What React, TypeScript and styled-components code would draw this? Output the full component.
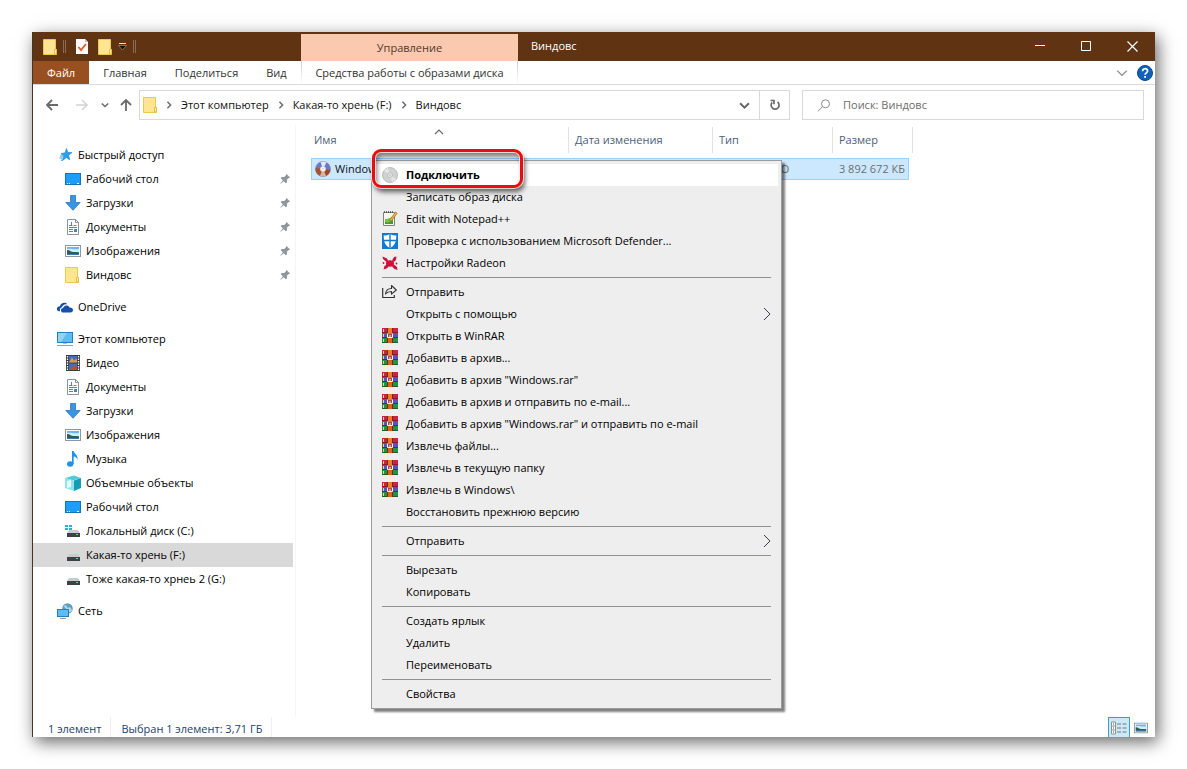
import React from "react";
import styled, { createGlobalStyle, css } from "styled-components";

const GlobalStyle = createGlobalStyle`
  *, *::before, *::after { box-sizing: border-box; }
  body {
    margin: 0;
    background: #fff;
    color: #000;
    font: 11px/16px "Open Sans", "Noto Sans", sans-serif;
  }
  button, input { font: inherit; color: inherit; }
  svg { display: block; flex: none; }
`;

const plainButton = css`
  display: flex;
  align-items: center;
  margin: 0;
  padding: 0;
  border: 0;
  background: none;
  white-space: nowrap;
  cursor: default;
`;

const Page = styled.div`
  min-height: 100vh;
  padding: 32px;
  display: flex;
`;

const Window = styled.div`
  flex: 1;
  min-width: 0;
  display: flex;
  flex-direction: column;
  background: #fff;
  border-left: 1px solid #4a3420;
  box-shadow: 3px 5px 16px rgba(0, 0, 0, 0.6);
`;

/* ---------- title bar and ribbon ---------- */

const Header = styled.header`
  display: grid;
  grid-template-columns: 268px 217px 1fr;
  grid-template-rows: 29px 23px;
  border-bottom: 1px solid #dadbdc;
`;

const QuickTools = styled.div`
  display: flex;
  align-items: center;
  padding-left: 10px;
  background: #603313;
`;

const ToolButton = styled.button<{ $after?: number }>`
  ${plainButton}
  margin-right: ${(p) => p.$after ?? 6}px;
`;

const Grip = styled.span`
  width: 3px;
  height: 13px;
  margin-right: 10px;
  border: solid #8b6b55;
  border-width: 0 1px;
`;

const ContextCap = styled.div`
  display: flex;
  padding-top: 2px;
  background: #603313;
`;

const ContextTitle = styled.div`
  flex: 1;
  padding-top: 1px;
  display: flex;
  align-items: center;
  justify-content: center;
  background: #fbc9b0;
  color: #54382b;
`;

const TitleBar = styled.div`
  display: flex;
  align-items: stretch;
  background: #603313;
  color: #fff;
`;

const Title = styled.h1`
  flex: 1;
  margin: 0;
  padding: 6px 13px;
  font-size: 11px;
  font-weight: 400;
`;

const WindowButton = styled.button`
  ${plainButton}
  width: 46px;
  justify-content: center;
`;

const Tabs = styled.nav`
  display: flex;
`;

const Tab = styled.button<{ $file?: boolean }>`
  ${plainButton}
  padding: 0 14px;
  color: ${(p) => (p.$file ? "#fff" : "#333")};
  background: ${(p) => (p.$file ? "#985020" : "none")};
`;

const ContextTab = styled.button`
  ${plainButton}
  justify-content: center;
  color: #333;
  border: solid;
  border-width: 0 1px;
  border-image: linear-gradient(#c9cacb, #fff) 1;
`;

const RibbonEnd = styled.div`
  display: flex;
  align-items: center;
  justify-content: flex-end;
  gap: 9px;
  padding-right: 2px;
`;

/* ---------- navigation row ---------- */

const NavRow = styled.div`
  display: flex;
  align-items: center;
  padding: 5px 11px 5px 0;
`;

const NavButtons = styled.div`
  display: flex;
  align-items: center;
  width: 106px;
  padding-left: 12px;
`;

const NavButton = styled.button<{ $gap?: number }>`
  ${plainButton}
  margin-right: ${(p) => p.$gap ?? 0}px;
`;

const AddressBar = styled.div`
  flex: 1;
  height: 30px;
  display: flex;
  align-items: center;
  padding-left: 3px;
  border: 1px solid #d9d9d9;
`;

const Crumb = styled.button`
  ${plainButton}
  color: #111;
`;

const CrumbArrow = styled.span`
  width: 24px;
  display: flex;
  justify-content: center;
`;

const AddressEnd = styled.button<{ $divided?: boolean }>`
  ${plainButton}
  justify-content: center;
  align-self: stretch;
  width: 30px;
  border-left: ${(p) => (p.$divided ? "1px solid #d9d9d9" : "0")};
`;

const Spacer = styled.span`
  flex: 1;
`;

const SearchBox = styled.label`
  flex: 0 0 342px;
  height: 30px;
  margin-left: 12px;
  padding-left: 14px;
  display: flex;
  align-items: center;
  gap: 12px;
  border: 1px solid #d9d9d9;
`;

const SearchInput = styled.input`
  flex: 1;
  min-width: 0;
  padding: 0;
  border: 0;
  outline: 0;
  background: none;
  &::placeholder { color: #6d6d6d; opacity: 1; }
`;

/* ---------- body ---------- */

const Body = styled.div`
  flex: 1;
  display: flex;
`;

const Sidebar = styled.nav`
  width: 263px;
  padding: 18px 2px 0 0;
  border-right: 1px solid #f5f5f5;
`;

const Group = styled.ul`
  margin: 0 0 8px;
  padding: 0;
  list-style: none;
`;

const SideLink = styled.a<{ $nested?: boolean; $active?: boolean }>`
  height: 24px;
  padding: 0 2px 0 ${(p) => (p.$nested ? 32 : 24)}px;
  display: flex;
  align-items: center;
  gap: 5px;
  color: #000;
  text-decoration: none;
  background: ${(p) => (p.$active ? "#d9d9d9" : "none")};
  white-space: nowrap;
`;

const SideLabel = styled.span`
  flex: 1;
`;

const Main = styled.main`
  flex: 1;
  position: relative;
  padding: 2px 0 0 15px;
`;

const FileTable = styled.table`
  table-layout: fixed;
  width: 602px;
  border-collapse: separate;
  border-spacing: 0;
`;

const HeadCell = styled.th<{ $width: number; $pad?: number }>`
  position: relative;
  width: ${(p) => p.$width}px;
  height: 26px;
  padding: 0 0 0 ${(p) => p.$pad ?? 6}px;
  border-right: ${(p) => (p.$width === 76 ? "0" : "1px solid #e2e2e2")};
  color: #4c607a;
  font-weight: 400;
  text-align: left;
`;

const SortMark = styled.span`
  position: absolute;
  top: 0;
  left: 50%;
  margin-left: -6px;
`;

const Gap = styled.td`
  height: 5px;
  padding: 0;
`;

const Cell = styled.td<{ $first?: boolean; $last?: boolean }>`
  height: 22px;
  padding: 0 3px 0 ${(p) => (p.$first ? 3 : p.$last ? 0 : 6)}px;
  background: #cce8ff;
  border: solid #99d1ff;
  border-width: 1px ${(p) => (p.$last ? 1 : 0)}px 1px ${(p) => (p.$first ? 1 : 0)}px;
  color: ${(p) => (p.$first ? "#111" : "#6d6d6d")};
  text-align: ${(p) => (p.$last ? "right" : "left")};
  white-space: nowrap;
`;

const FileName = styled.span`
  display: flex;
  align-items: center;
  gap: 4px;
`;

/* ---------- context menu ---------- */

const Menu = styled.div`
  position: absolute;
  top: 35px;
  left: 75px;
  width: 411px;
  padding: 3px;
  background: #eee;
  border: 1px solid #9b9b9b;
  box-shadow: 3px 3px 2px rgba(0, 0, 0, 0.5);
`;

const MenuItem = styled.button<{ $active?: boolean }>`
  ${plainButton}
  width: 100%;
  height: 22px;
  padding: 0 7px;
  gap: 8px;
  text-align: left;
  color: #000;
  background: ${(p) => (p.$active ? "#fff" : "none")};
  font-weight: ${(p) => (p.$active ? 700 : 400)};
`;

const IconSlot = styled.span`
  width: 16px;
  height: 16px;
`;

const MenuLabel = styled.span`
  flex: 1;
`;

const Separator = styled.hr`
  height: 1px;
  margin: 3px 7px;
  border: 0;
  background: #919191;
`;

const Callout = styled.div`
  position: absolute;
  top: 24px;
  left: 76px;
  width: 151px;
  height: 39px;
  border: 3px solid #ed0c0c;
  border-radius: 9px;
  box-shadow:
    0 0 0 1px rgba(255, 255, 255, 0.7),
    2px 4px 5px rgba(0, 0, 0, 0.6),
    inset 0 0 0 1px rgba(255, 255, 255, 0.7),
    inset 2px 5px 5px rgba(0, 0, 0, 0.5);
  pointer-events: none;
`;

/* ---------- status bar ---------- */

const StatusBar = styled.footer`
  height: 20px;
  display: flex;
  color: #24426e;
`;

const StatusText = styled.span`
  padding: 4px 10px 0;
  box-shadow: inset -1px 0 #f1f1f1;
  white-space: nowrap;
  &:first-child { padding-left: 15px; }
`;

const ViewButton = styled.button<{ $active?: boolean }>`
  ${plainButton}
  width: 22px;
  justify-content: center;
  border: ${(p) => (p.$active ? "solid #3aa0c4" : "solid transparent")};
  border-width: 1px 1px 0;
  background: ${(p) => (p.$active ? "#cce8f5" : "none")};
  &:last-child { margin-right: 3px; }
`;

/* ---------- drawings ---------- */

const Folder = () => (
  <svg width="14" height="16" viewBox="0 0 14 16">
    <path d="M.5.5h12v10h1v5H.5z" fill="#fee58f" stroke="#ecc94d" />
    <path d="M11.500 15V10.500h2V15z" fill="#fff0b0" stroke="#e6bd3c" />
  </svg>
);

const CheckedDoc = () => (
  <svg width="12" height="15" viewBox="0 0 12 15">
    <path d="M0 0h9l3 3v12H0z" fill="#fdfdfd" />
    <path d="M9 0v3h3z" fill="#b9c3cc" />
    <path d="M2.500 8l2.500 3 5-6" fill="none" stroke="#e2572b" strokeWidth="1.800" />
  </svg>
);

const CustomizeMark = () => (
  <svg width="9" height="8" viewBox="0 0 9 8">
    <path d="M1 .5h7" stroke="#e9dfd8" />
    <path d="M.5 2.500h8L4.500 7z" fill="#111" stroke="#b9a394" strokeWidth=".6" />
  </svg>
);

const chevronPaths = { down: "M1 3l4 4 4-4", up: "M1 7l4-4 4 4", right: "M3 1l4 4-4 4" };

type ChevronProps = { dir?: keyof typeof chevronPaths; size?: number; color?: string; width?: number };

const Chevron = ({ dir = "down", size = 8, color = "#6a6a6a", width = 1.8 }: ChevronProps) => (
  <svg width={size} height={size} viewBox="0 0 10 10">
    <path d={chevronPaths[dir]} fill="none" stroke={color} strokeWidth={width} />
  </svg>
);

const SubmenuArrow = () => (
  <svg width="8" height="14" viewBox="0 0 8 14">
    <path d="M1 1l6 6-6 6" fill="none" stroke="#3b3b4d" />
  </svg>
);

const Arrow = ({ color, up }: { color: string; up?: boolean }) => (
  <svg width="14" height="14" viewBox="0 0 14 14">
    <path d={up ? "M7 13V2M2 7l5-5 5 5" : "M13 7H2M7 2L2 7l5 5"} fill="none" stroke={color} strokeWidth="1.800" />
  </svg>
);

const ForwardArrow = () => (
  <svg width="14" height="14" viewBox="0 0 14 14">
    <path d="M1 7h11M7 2l5 5-5 5" fill="none" stroke="#d4d4d4" strokeWidth="1.500" />
  </svg>
);

const Refresh = () => (
  <svg width="12" height="12" viewBox="0 0 12 12">
    <path d="M3.200 3.400A4 4 0 1 0 8.600 3" fill="none" stroke="#6a6a6a" strokeWidth="1.700" />
    <path d="M1.500 1.500H5V5.200" fill="none" stroke="#6a6a6a" strokeWidth="1.700" />
  </svg>
);

const Magnifier = () => (
  <svg width="14" height="13" viewBox="0 0 14 13">
    <circle cx="8.500" cy="4.800" r="4" fill="none" stroke="#8a8a8a" />
    <path d="M5.500 7.700L1 12.300" stroke="#8a8a8a" />
  </svg>
);

const Help = () => (
  <svg width="16" height="16" viewBox="0 0 16 16">
    <circle cx="8" cy="8" r="7.500" fill="#0f62b5" stroke="#0a4a8c" />
    <path d="M5.600 6.200c0-3.300 5-3.200 5-.3 0 2-2.500 1.900-2.500 3.900" fill="none" stroke="#fff" strokeWidth="1.700" />
    <rect x="7.200" y="11" width="1.800" height="1.800" fill="#fff" />
  </svg>
);

const Star = () => (
  <svg width="16" height="16" viewBox="0 0 16 16">
    <path d="M9.500 1.500l1.300 4 4.200.1-3.400 2.600 1.200 4.700L9.400 10.600 5.500 13.500l1.200-4.700L4 6.500l4-.6z" fill="#2ba0e8" stroke="#1c7fc9" strokeWidth=".6" />
    <path d="M3 9h3M2.500 11h3M4 13.200h1.500M4 7h2" stroke="#2f9ae0" />
  </svg>
);

const Desktop = () => (
  <svg width="16" height="16" viewBox="0 0 16 16">
    <rect x=".5" y="2.500" width="15" height="11" fill="#1e9dfa" stroke="#1273bd" />
    <path d="M2 12.500h1M4 12.500h1M12 12.500h2" stroke="#e8f5ff" />
  </svg>
);

const Download = () => (
  <svg width="16" height="16" viewBox="0 0 16 16">
    <path d="M5.500.5h5v7h4.700L8 15.300.8 7.500h4.700z" fill="#3c93e4" stroke="#2b76bf" strokeWidth=".8" />
  </svg>
);

const Document = () => (
  <svg width="16" height="16" viewBox="0 0 16 16">
    <path d="M2.500.5h8l3 3v12h-11z" fill="#fff" stroke="#8b949b" />
    <path d="M10.500.5v3h3" fill="none" stroke="#8b949b" />
    <path d="M6.500 3v3M4 6.500h3.500M8.500 6.500h3M4 8.500h8M4 10.500h4M4 12.500h4" stroke="#2f8fd8" />
    <rect x="9" y="10" width="3" height="3" fill="#5f7f99" />
  </svg>
);

const Picture = ({ size = 16 }: { size?: number }) => (
  <svg width={size} height={size} viewBox="0 0 16 16">
    <rect x=".5" y="2.500" width="15" height="11" fill="#fff" stroke="#8f979d" />
    <rect x="2" y="4" width="12" height="8" fill="#6fb4ee" />
    <path d="M2 6c4-1 6 1 12 0v3H2z" fill="#d7ecfa" />
    <path d="M2 7c3 0 4 2 6 2s4 0 6 .5V11H2z" fill="#2f5c55" />
    <path d="M2 11h12v1H2z" fill="#3c78a8" />
  </svg>
);

const Cloud = () => (
  <svg width="16" height="16" viewBox="0 0 16 16">
    <path d="M0 10.500C-.3 8 1.500 7 3 7.200 3.500 4 8 2.300 10.300 5.300c-3-.6-5 1-5.300 3-1.500.2-2.500 1.800-2 3.900C1.500 12.500.2 12 0 10.500z" fill="#1550a8" />
    <path d="M4 11.200c0-1.500 1-2.200 2.200-2.200.5-3 5-3.600 6.300-.6C14.700 8.300 16 9.500 16 11c0 1.500-1 2.500-2.500 2.500H6.200C5 13.500 4 12.600 4 11.200z" fill="#1550a8" />
  </svg>
);

const Computer = () => (
  <svg width="16" height="16" viewBox="0 0 16 16">
    <rect x=".5" y="1.500" width="15" height="10" fill="#5cbcf3" stroke="#2c7db3" />
    <path d="M1 2h9L4 11H1z" fill="#8ed4fa" />
    <path d="M6 12.500h4" stroke="#b5c3cc" />
    <path d="M0 14.500h16" stroke="#8da0ac" />
  </svg>
);

const Film = () => (
  <svg width="16" height="16" viewBox="0 0 16 16">
    <rect x="1" y="0" width="14" height="16" fill="#3a3a3a" />
    <path d="M2.500 1v15M13.500 1v15" stroke="#fff" strokeDasharray="1.500 1" strokeWidth="1.300" />
    <rect x="4" y="1" width="8" height="6.500" fill="#3f6fc4" />
    <rect x="4" y="8.500" width="8" height="6.500" fill="#3f6fc4" />
    <path d="M4 7.500l3-5 2 3 3-2v4z" fill="#d8a03a" />
    <path d="M4 15l4-3 1-3 3 5v1z" fill="#c64c2e" />
  </svg>
);

const Note = () => (
  <svg width="16" height="16" viewBox="0 0 16 16">
    <ellipse cx="5.200" cy="13" rx="3.200" ry="2.700" fill="#1b93ea" />
    <path d="M7 0h1.700c.3 2.800 4.400 3.800 4 9-.8-2.300-2-3.300-4-3.500V13H7z" fill="#1b93ea" />
  </svg>
);

const Cube = () => (
  <svg width="16" height="16" viewBox="0 0 16 16">
    <path d="M0 3l9-2.500 7 2.500-8 2.500z" fill="#56c9d8" />
    <path d="M0 3l9 2.500V16L0 13z" fill="#8fe3ea" />
    <path d="M9 5.500L16 3v10l-7 3z" fill="#159cb5" />
    <path d="M2 6l4-1v7l-4 1z" fill="#e6fafb" />
  </svg>
);

const Drive = ({ system }: { system?: boolean }) => (
  <svg width="16" height="16" viewBox="0 0 16 16">
    {system && <path d="M0 2h3v2H0zM4 2h3v2H4zM0 5h3v2H0zM4 5h3v2H4z" fill="#20b5d8" />}
    <path d="M4 7h9l2 3H2z" fill="#c9ccce" />
    <rect x="2" y="10" width="13" height="4" fill="#3c4245" />
    <rect x="11" y="11" width="2" height="1" fill="#5fe08a" />
  </svg>
);

const Network = () => (
  <svg width="16" height="16" viewBox="0 0 16 16">
    <circle cx="10.500" cy="5.500" r="5.300" fill="#5f9fc4" />
    <path d="M7 3c2-2 3 0 3 1s2 1 3 0l2 3c-1 3-4 3-5 0S7 5 7 3z" fill="#b5d8e6" />
    <rect x=".5" y="6.500" width="11" height="7" fill="#5cbcf3" stroke="#2c7db3" />
    <path d="M3 15.500h6" stroke="#8da0ac" />
  </svg>
);

const Pin = () => (
  <svg width="12" height="12" viewBox="0 0 12 12">
    <path d="M7.300.8l3.900 3.900-1.500.3-1.800 1.800.1 2.700-1.200.8-2-2L.8 11.300l3-4-2-2L2.600 4l2.600.1L7 2.300z" fill="#8d979d" />
  </svg>
);

const ColorDisc = () => (
  <svg width="16" height="16" viewBox="0 0 16 16">
    <circle cx="8" cy="8" r="7.500" fill="#6f78c8" stroke="#85859a" strokeWidth=".7" />
    <path d="M8 8L.8 7A7.300 7.300 0 0 0 5 14.700z" fill="#a9522f" />
    <path d="M8 8l7.200 1A7.300 7.300 0 0 1 11 14.700z" fill="#a8461f" />
    <path d="M8 8l-3 6.700a7.300 7.300 0 0 0 6 0z" fill="#e3b190" />
    <path d="M8 8L5.500 1.100a7.300 7.300 0 0 1 6 .4z" fill="#dfe7fa" />
    <circle cx="8" cy="8" r="2.600" fill="#f6f6f6" stroke="#d5d5d5" strokeWidth=".7" />
    <circle cx="8" cy="8" r="1" fill="#ddd" />
  </svg>
);

const GrayDisc = () => (
  <svg width="16" height="16" viewBox="0 0 16 16">
    <circle cx="8" cy="8" r="7.500" fill="#d0d2d1" stroke="#adafae" strokeWidth=".8" />
    <path d="M8 8L2 4a7 7 0 0 1 4-3zM8 8l6 4a7 7 0 0 1-4 3z" fill="#e4e5e4" />
    <circle cx="8" cy="8" r="2.400" fill="#eee" stroke="#b2b4b3" strokeWidth=".8" />
    <circle cx="8" cy="8" r="1" fill="#c4c4c4" />
  </svg>
);

const Notepad = () => (
  <svg width="16" height="16" viewBox="0 0 16 16">
    <path d="M1.500 1.500h11v13h-11z" fill="#f6f7f1" stroke="#7d8577" />
    <path d="M3 8c3 0 6-1 8-3v8H3z" fill="#7cc142" />
    <path d="M3 11c3 1 6 0 8-2v4H3z" fill="#3f9b3a" />
    <path d="M2 1h10" stroke="#444" strokeDasharray="1 1" strokeWidth="1.500" />
    <path d="M8 8.500L13.500 1l1.700 1.300L9.800 9.500 8 10.500z" fill="#f1b43a" stroke="#8a5f1c" strokeWidth=".6" />
  </svg>
);

const Defender = () => (
  <svg width="16" height="16" viewBox="0 0 16 16">
    <rect width="16" height="16" fill="#1279d3" />
    <path d="M8 1c2 1.300 4 1.600 6.300 1.600C14.300 9 13 12.500 8 15.200 3 12.500 1.700 9 1.700 2.600 4 2.600 6 2.300 8 1z" fill="#fff" />
    <path d="M8 1v14.500M1 7.500h14" stroke="#1279d3" strokeWidth="1.400" />
  </svg>
);

const Radeon = () => (
  <svg width="16" height="16" viewBox="0 0 16 16">
    <ellipse cx="8" cy="8.500" rx="4" ry="3.300" fill="#d0103a" />
    <path d="M.5 1.500l4.500 2 1.500 3-2 .5-3.500-3zM10 5.500l2-3.500 2.500-.5-.5 3.500-2 2zM1.500 14.500l1-3.500 2.500-1.500L6.500 12l-2 1.500zM10 11.500l2-2 3 2.500.5 3-3-1z" fill="#d0103a" />
    <circle cx="1.500" cy="8" r=".9" fill="#d0103a" />
    <circle cx="14.500" cy="8.500" r=".9" fill="#d0103a" />
  </svg>
);

const Share = () => (
  <svg width="16" height="16" viewBox="0 0 16 16">
    <path d="M.7 4v9.500h11.600V11" fill="none" stroke="#333" strokeWidth="1.200" />
    <path d="M3.500 10c.3-3.500 2.500-5.500 6-5.500V1.500l4.800 4.500-4.800 4.200V7.500c-2.500 0-4.500.7-6 2.500z" fill="none" stroke="#333" strokeWidth="1.100" strokeLinejoin="round" />
  </svg>
);

const WinRar = () => (
  <svg width="16" height="16" viewBox="0 0 16 16">
    <rect width="16" height="5" fill="#c92445" />
    <rect y="5" width="16" height="5" fill="#5555bd" />
    <rect y="10" width="16" height="5" fill="#1f9544" />
    <path d="M0 4.500h16" stroke="#8f1531" />
    <path d="M0 9.500h16" stroke="#343478" />
    <path d="M0 14.500h16" stroke="#146230" />
    <path d="M1.500 1v3M1.500 6v3M1.500 11v3" stroke="#f2d27a" />
    <rect x="6" width="4" height="6" fill="#ee7a2c" />
    <rect x="6" y="10" width="4" height="5" fill="#d9631f" />
    <path d="M5.500 0v5M10.500 0v5M5.500 10v5M10.500 10v5" stroke="#6e2a1e" />
    <rect x="5" y="6" width="6" height="4" fill="#9a4d45" />
    <path d="M5.500 5.500v4h5v-4M8 7v2.500" fill="none" stroke="#f7f2ec" />
  </svg>
);

const DetailsView = () => (
  <svg width="16" height="14" viewBox="0 0 16 14">
    <path d="M.5 1h4v12h-4zM.5 5h4M.5 9h4" fill="#fff" stroke="#8a9298" />
    <path d="M2 3h1M2 7h1M2 11h1" stroke="#444" />
    <path d="M6 3h4M11.500 3h4M6 7h4M11.500 7h4M6 11h4M11.500 11h4" stroke="#6f7a80" />
  </svg>
);

/* ---------- data ---------- */

type SideItem = { label: string; icon: React.ReactNode; pinned?: boolean; active?: boolean };

const groups: SideItem[][] = [
  [
    { label: "Быстрый доступ", icon: <Star /> },
    { label: "Рабочий стол", icon: <Desktop />, pinned: true },
    { label: "Загрузки", icon: <Download />, pinned: true },
    { label: "Документы", icon: <Document />, pinned: true },
    { label: "Изображения", icon: <Picture />, pinned: true },
    { label: "Виндовс", icon: <Folder />, pinned: true },
  ],
  [{ label: "OneDrive", icon: <Cloud /> }],
  [
    { label: "Этот компьютер", icon: <Computer /> },
    { label: "Видео", icon: <Film /> },
    { label: "Документы", icon: <Document /> },
    { label: "Загрузки", icon: <Download /> },
    { label: "Изображения", icon: <Picture /> },
    { label: "Музыка", icon: <Note /> },
    { label: "Объемные объекты", icon: <Cube /> },
    { label: "Рабочий стол", icon: <Desktop /> },
    { label: "Локальный диск (C:)", icon: <Drive system /> },
    { label: "Какая-то хрень (F:)", icon: <Drive />, active: true },
    { label: "Тоже какая-то хрнеь 2 (G:)", icon: <Drive /> },
  ],
  [{ label: "Сеть", icon: <Network /> }],
];

type Entry = { label: string; icon?: React.ReactNode; submenu?: boolean; active?: boolean };

const menu: Entry[][] = [
  [
    { label: "Подключить", icon: <GrayDisc />, active: true },
    { label: "Записать образ диска" },
    { label: "Edit with Notepad++", icon: <Notepad /> },
    { label: "Проверка с использованием Microsoft Defender...", icon: <Defender /> },
    { label: "Настройки Radeon", icon: <Radeon /> },
  ],
  [
    { label: "Отправить", icon: <Share /> },
    { label: "Открыть с помощью", submenu: true },
    { label: "Открыть в WinRAR", icon: <WinRar /> },
    { label: "Добавить в архив...", icon: <WinRar /> },
    { label: 'Добавить в архив "Windows.rar"', icon: <WinRar /> },
    { label: "Добавить в архив и отправить по e-mail...", icon: <WinRar /> },
    { label: 'Добавить в архив "Windows.rar" и отправить по e-mail', icon: <WinRar /> },
    { label: "Извлечь файлы...", icon: <WinRar /> },
    { label: "Извлечь в текущую папку", icon: <WinRar /> },
    { label: "Извлечь в Windows\\", icon: <WinRar /> },
    { label: "Восстановить прежнюю версию" },
  ],
  [{ label: "Отправить", submenu: true }],
  [{ label: "Вырезать" }, { label: "Копировать" }],
  [{ label: "Создать ярлык" }, { label: "Удалить" }, { label: "Переименовать" }],
  [{ label: "Свойства" }],
];

const crumbs = ["Этот компьютер", "Какая-то хрень (F:)", "Виндовс"];

export default function App() {
  return (
    <Page>
      <GlobalStyle />
      <Window>
        <Header>
          <QuickTools>
            <ToolButton aria-label="Папка"><Folder /></ToolButton>
            <Grip />
            <ToolButton aria-label="Свойства" $after={10}><CheckedDoc /></ToolButton>
            <ToolButton aria-label="Новая папка"><Folder /></ToolButton>
            <ToolButton aria-label="Настройка панели"><CustomizeMark /></ToolButton>
            <Grip />
          </QuickTools>
          <ContextCap><ContextTitle>Управление</ContextTitle></ContextCap>
          <TitleBar>
            <Title>Виндовс</Title>
            <WindowButton aria-label="Свернуть">
              <svg width="11" height="11" viewBox="0 0 11 11"><path d="M0 4.500h10" stroke="#fff" /></svg>
            </WindowButton>
            <WindowButton aria-label="Развернуть">
              <svg width="11" height="11" viewBox="0 0 11 11"><path d="M.5.5h9v9h-9z" fill="none" stroke="#fff" /></svg>
            </WindowButton>
            <WindowButton aria-label="Закрыть">
              <svg width="11" height="11" viewBox="0 0 11 11"><path d="M.5.5l10 10M10.500.5l-10 10" stroke="#fff" strokeWidth="1.200" /></svg>
            </WindowButton>
          </TitleBar>
          <Tabs>
            <Tab $file>Файл</Tab>
            <Tab>Главная</Tab>
            <Tab>Поделиться</Tab>
            <Tab>Вид</Tab>
          </Tabs>
          <ContextTab>Средства работы с образами диска</ContextTab>
          <RibbonEnd>
            <Chevron size={12} color="#8a8a8a" width={1.1} />
            <Help />
          </RibbonEnd>
        </Header>

        <NavRow>
          <NavButtons>
            <NavButton aria-label="Назад" $gap={16}><Arrow color="#6a6a6a" /></NavButton>
            <NavButton aria-label="Вперед" $gap={12}><ForwardArrow /></NavButton>
            <NavButton aria-label="Последние" $gap={10}><Chevron /></NavButton>
            <NavButton aria-label="Вверх"><Arrow up color="#6a6a6a" /></NavButton>
          </NavButtons>
          <AddressBar>
            <Folder />
            {crumbs.map((c) => (
              <React.Fragment key={c}>
                <CrumbArrow><Chevron dir="right" /></CrumbArrow>
                <Crumb>{c}</Crumb>
              </React.Fragment>
            ))}
            <Spacer />
            <AddressEnd aria-label="Предыдущие расположения"><Chevron size={11} color="#666" width={1.8} /></AddressEnd>
            <AddressEnd aria-label="Обновить" $divided><Refresh /></AddressEnd>
          </AddressBar>
          <SearchBox>
            <Magnifier />
            <SearchInput type="text" aria-label="Поиск" placeholder="Поиск: Виндовс" />
          </SearchBox>
        </NavRow>

        <Body>
          <Sidebar>
            {groups.map((group, g) => (
              <Group key={g}>
                {group.map((item, i) => (
                  <li key={item.label}>
                    <SideLink href="#" $nested={i > 0} $active={item.active}>
                      <IconSlot>{item.icon}</IconSlot>
                      <SideLabel>{item.label}</SideLabel>
                      {item.pinned && <Pin />}
                    </SideLink>
                  </li>
                ))}
              </Group>
            ))}
          </Sidebar>

          <Main>
            <FileTable>
              <thead>
                <tr>
                  <HeadCell $width={258} $pad={3}>
                    Имя
                    <SortMark><Chevron dir="up" size={10} color="#666" width={1.1} /></SortMark>
                  </HeadCell>
                  <HeadCell $width={144}>Дата изменения</HeadCell>
                  <HeadCell $width={120}>Тип</HeadCell>
                  <HeadCell $width={76}>Размер</HeadCell>
                  <HeadCell $width={4} $pad={0} aria-hidden />
                </tr>
              </thead>
              <tbody>
                <tr aria-hidden><Gap colSpan={5} /></tr>
                <tr>
                  <Cell $first><FileName><ColorDisc />Windows</FileName></Cell>
                  <Cell />
                  <Cell>Формат – ISO</Cell>
                  <Cell $last>3 892 672 КБ</Cell>
                </tr>
              </tbody>
            </FileTable>

            <Menu role="menu">
              {menu.map((section, s) => (
                <React.Fragment key={s}>
                  {s > 0 && <Separator />}
                  {section.map((entry) => (
                    <MenuItem key={entry.label} role="menuitem" $active={entry.active}>
                      <IconSlot>{entry.icon}</IconSlot>
                      <MenuLabel>{entry.label}</MenuLabel>
                      {entry.submenu && <SubmenuArrow />}
                    </MenuItem>
                  ))}
                </React.Fragment>
              ))}
            </Menu>
            <Callout />
          </Main>
        </Body>

        <StatusBar>
          <StatusText>1 элемент</StatusText>
          <StatusText>Выбран 1 элемент: 3,71 ГБ</StatusText>
          <Spacer />
          <ViewButton $active aria-label="Таблица"><DetailsView /></ViewButton>
          <ViewButton aria-label="Крупные значки"><Picture size={14} /></ViewButton>
        </StatusBar>
      </Window>
    </Page>
  );
}
